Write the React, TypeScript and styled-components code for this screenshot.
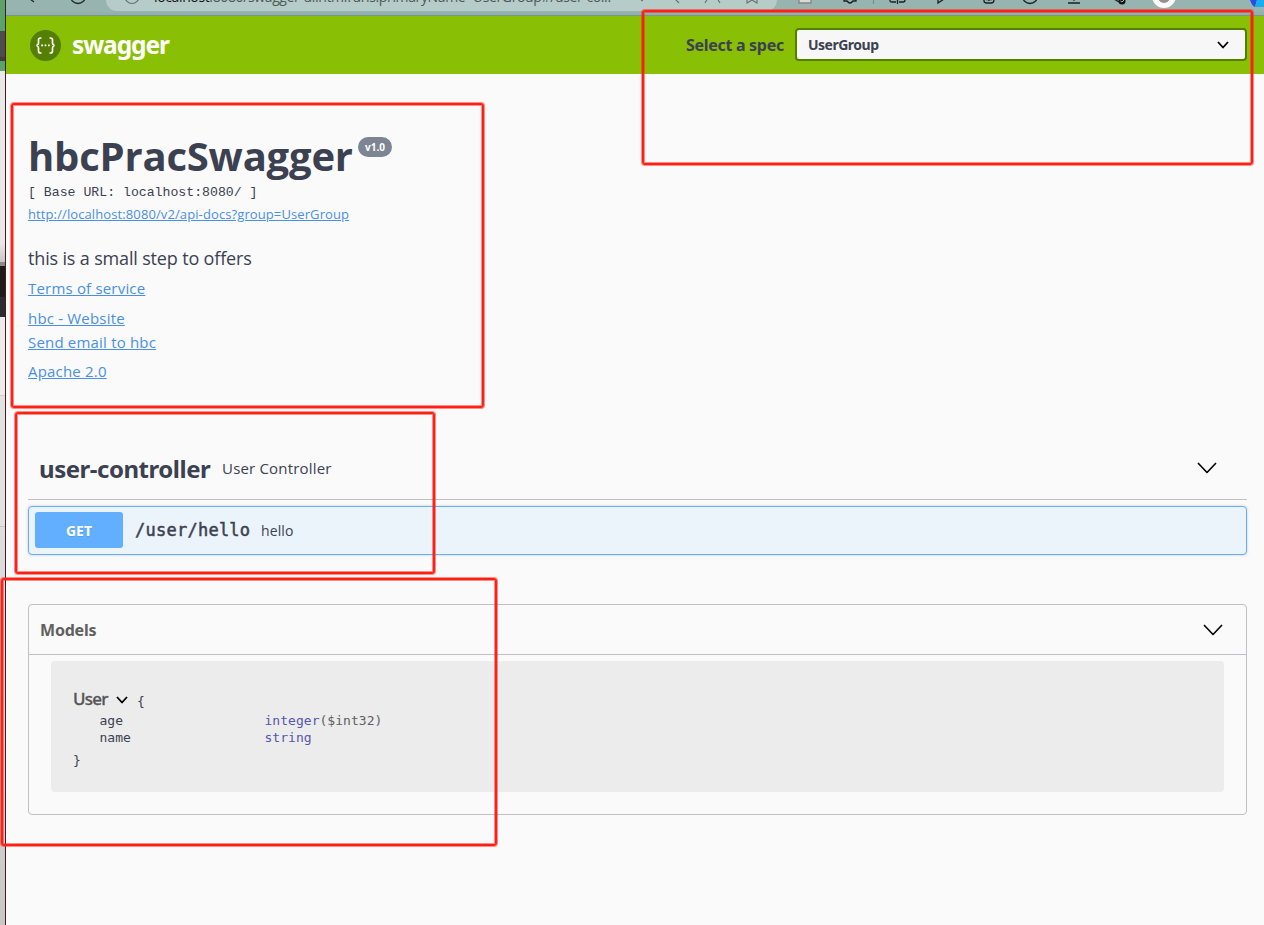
import React from "react";
import styled, { createGlobalStyle } from "styled-components";

const GlobalStyle = createGlobalStyle`
  * { box-sizing: border-box; }
  body { margin: 0; background: #fafafa; color: #3b4151; overflow: hidden; }
`;

const display = `"Noto Sans", "Open Sans", sans-serif`;
const body = `"Open Sans", sans-serif`;
const mono = `"DejaVu Sans Mono", monospace`;

const Screen = styled.div`
  position: relative;
  display: flex;
  width: 1264px;
  height: 925px;
  overflow: hidden;
  font-family: ${body};
`;

const Backdrop = styled.aside`
  width: 6px;
  flex: none;
  display: flex;
  flex-direction: column;
  border-right: 1px solid #451c1a;
`;

const Slab = styled.div<{ $h: number; $bg: string }>`
  height: ${(p) => p.$h}px;
  flex: none;
  background: ${(p) => p.$bg};
`;

const Browser = styled.main`
  flex: 1;
  min-width: 0;
  display: flex;
  flex-direction: column;
`;

const AddressStrip = styled.div`
  height: 16px;
  flex: none;
  display: flex;
  align-items: flex-start;
  background: linear-gradient(#98b4b0 70%, #8fafab);
  border-bottom: 1px solid #7d948c;
  overflow: hidden;
`;

const NavIcons = styled.svg`
  width: 100px;
  height: 15px;
  flex: none;
`;

const AddressField = styled.div`
  width: 671px;
  height: 11px;
  flex: none;
  display: flex;
  background: #b6ccc8;
  border-radius: 0 0 16px 16px;
  overflow: hidden;
`;

const Url = styled.div`
  width: 458px;
  height: 11px;
  flex: none;
  margin-left: 14px;
  font: 14px/18px ${body};
  color: #4d5957;
  white-space: nowrap;
  b { font-weight: 400; color: #101414; }
  span { display: block; margin-top: -12px; letter-spacing: -0.37px; }
`;

const Topbar = styled.header`
  height: 58px;
  flex: none;
  display: flex;
  align-items: center;
  padding: 0 17px 0 24px;
  background: #89bf04;
`;

const Brand = styled.span`
  margin: 0 0 0 11px;
  flex: 1;
  font: 700 24.5px/34px ${display};
  letter-spacing: -1.1px;
  color: #fff;
`;

const SpecLabel = styled.label`
  width: 98px;
  margin-right: 12px;
  font: 700 16px/24px ${display};
  letter-spacing: -0.3px;
  white-space: nowrap;
`;

const SpecSelect = styled.div`
  width: 452px;
  height: 33px;
  margin: -1px 0 0 -1px;
  display: flex;
  align-items: center;
  justify-content: space-between;
  padding: 0 16px 0 11px;
  border: 2px solid #547f00;
  border-radius: 4px;
  background: #f7f7f7;
  font: 700 14px/20px ${display};
  letter-spacing: -0.5px;
`;

const Content = styled.div`
  padding: 56px 17px 0 22px;
`;

const TitleRow = styled.div`
  height: 53px;
  display: flex;
  align-items: flex-start;
`;

const Title = styled.h1`
  margin: 0;
  width: 324px;
  font: 700 40px/52px ${body};
  letter-spacing: -0.2px;
  white-space: nowrap;
`;

const Version = styled.span`
  width: 34px;
  height: 20px;
  margin: 7px 0 0 6px;
  border-radius: 10px;
  background: #7d8492;
  color: #fff;
  font: 700 10px/20px ${body};
  text-align: center;
`;

const BaseUrl = styled.pre`
  margin: 0;
  height: 18px;
  font: 13.2px/20px "Liberation Mono", monospace;
`;

const Link = styled.a<{ $size?: number; $gap: number; $track?: number }>`
  display: block;
  width: fit-content;
  height: 20px;
  margin-top: ${(p) => p.$gap}px;
  font: ${(p) => p.$size ?? 15}px/20px ${body};
  letter-spacing: ${(p) => p.$track ?? 0.19}px;
  color: #4990e2;
  text-decoration: underline;
`;

const Description = styled.p`
  margin: 22px 0 0;
  font: 18px/24px ${body};
  letter-spacing: -0.16px;
`;

const TagHeader = styled.section`
  height: 64px;
  margin-top: 55px;
  display: flex;
  align-items: center;
  padding: 0 30px 0 11px;
  border-bottom: 1px solid #c0c0c4;
`;

const TagName = styled.h2`
  margin: 3px 0 0;
  width: 171px;
  font: 700 24px/32px ${display};
  letter-spacing: -0.47px;
  white-space: nowrap;
`;

const TagDescription = styled.span`
  flex: 1;
  margin-left: 12px;
  font: 15px/20px ${body};
  letter-spacing: 0.19px;
`;

const Operation = styled.section`
  height: 49px;
  margin-top: 6px;
  display: flex;
  align-items: center;
  padding: 0 6px 1px;
  border: 1px solid #61affe;
  border-radius: 4px;
  background: #ebf3fb;
  box-shadow: 0 0 3px rgba(0, 0, 0, 0.19);
`;

const Method = styled.span`
  width: 88px;
  height: 36px;
  border-radius: 3px;
  background: #61affe;
  color: #fff;
  font: 700 14px/37px ${display};
  text-align: center;
  text-shadow: 0 1px 0 rgba(0, 0, 0, 0.1);
`;

const Path = styled.span`
  width: 115px;
  margin-left: 12px;
  font: 400 17px/20px ${mono};
  letter-spacing: 0.25px;
  -webkit-text-stroke: 0.5px #3b4151;
  white-space: nowrap;
`;

const Summary = styled.span`
  margin: 1px 0 0 11px;
  font: 14px/20px ${body};
  letter-spacing: 0.1px;
`;

const Models = styled.section`
  height: 211px;
  margin-top: 49px;
  border: 1px solid #c0c0c4;
  border-radius: 4px;
`;

const ModelsHeader = styled.div`
  height: 50px;
  display: flex;
  align-items: center;
  justify-content: space-between;
  padding: 1px 23px 0 11px;
  border-bottom: 1px solid #c0c0c4;
  color: #606060;
  font: 700 16px/24px ${display};
  letter-spacing: -0.2px;
`;

const ModelBox = styled.div`
  height: 131px;
  margin: 6px 22px 0;
  padding: 27px 22px 0;
  border-radius: 4px;
  background: #ececec;
  font: 13px/17px ${mono};
`;

const ModelHead = styled.div`
  height: 24px;
  display: flex;
  align-items: center;
`;

const ModelName = styled.span`
  width: 35px;
  margin: -2px 8px 0 0;
  font: 500 17px/22px ${display};
  letter-spacing: -0.8px;
  -webkit-text-stroke: 0.3px #555;
  color: #555;
`;

const Brace = styled.span<{ $left?: number; $top?: number }>`
  display: block;
  margin: ${(p) => p.$top ?? 0}px 0 0 ${(p) => p.$left ?? 0}px;
`;

const Property = styled.div`
  height: 17px;
  display: grid;
  grid-template-columns: 165px auto;
  padding-left: 26.5px;
  letter-spacing: 0.03px;
`;

const Type = styled.span`
  color: #55a;
  i { font-style: normal; color: #606060; }
`;

const Highlight = styled.div<{ $x: number; $y: number; $w: number; $h: number }>`
  position: absolute;
  left: ${(p) => p.$x}px;
  top: ${(p) => p.$y}px;
  width: ${(p) => p.$w}px;
  height: ${(p) => p.$h}px;
  border: 2px solid #ff2015;
  border-radius: 3px;
  box-shadow: 0 0 0 1px rgba(255, 32, 21, 0.5), inset 0 0 0 1px rgba(255, 32, 21, 0.5);
`;

const Chevron = ({ w, h, sw }: { w: number; h: number; sw: number }) => (
  <svg width={w} height={h} viewBox={`0 0 ${w} ${h}`} fill="none" stroke="#000" strokeWidth={sw}>
    <path d={`M1 1 L${w / 2} ${h - 1.5} L${w - 1} 1`} strokeLinejoin="round" />
  </svg>
);

const ToolIcons = styled.svg`
  width: 487px;
  height: 15px;
  flex: none;
`;

export default function App() {
  return (
    <Screen>
      <GlobalStyle />
      <Backdrop>
        <Slab $h={31} $bg="#5aa46b" />
        <Slab $h={26} $bg="#4c4c4c" />
        <Slab $h={4} $bg="#3d3d3d" />
        <Slab $h={10} $bg="#5aa46b" />
        <Slab $h={191} $bg="linear-gradient(#e8e8e8 90%, #c6c6c6)" />
        <Slab $h={4} $bg="#8a8a8a" />
        <Slab $h={31} $bg="#1c1c1c" />
        <Slab $h={20} $bg="#2c2d30" />
        <Slab $h={78} $bg="#ececec" />
        <Slab $h={1} $bg="#cfcfcf" />
        <Slab $h={130} $bg="#e2e2e2" />
        <Slab $h={1} $bg="#c4c4c4" />
        <Slab $h={398} $bg="linear-gradient(#dedede, #c8c8c8)" />
      </Backdrop>
      <Browser>
        <AddressStrip>
          <NavIcons viewBox="0 0 100 15" fill="none" stroke="#202828" strokeWidth="1.3">
            <path d="M24 -1 L28 2" />
            <circle cx="72" cy="-4" r="7.5" />
          </NavIcons>
          <AddressField>
            <svg width="34" height="11" fill="none" stroke="#64716f" strokeWidth="1.2">
              <circle cx="26" cy="-3.5" r="7" />
            </svg>
            <Url>
              <span><b>localhost</b>:8080/swagger-ui.html?urls.primaryName=UserGroup#/user-co...</span>
            </Url>
            <svg width="165" height="11" fill="none" stroke="#64716f" strokeWidth="1.1">
              <path d="M29 0 l2 1 M63 -1 l4 4 M93 3 l3 -5 M105 -2 l3 5 M135 -2 v5 l5 -3 l5 3 v-5" />
            </svg>
          </AddressField>
          <ToolIcons viewBox="777 0 487 15" fill="none" stroke="#182020" strokeWidth="1.3">
            <path d="M799 -3 v6 h12 v-6" stroke="#858585" fill="#d5d9d8" />
            <path d="M844 -1 v2 h3 q3 4 6 0 h3 v-2" />
            <path d="M873.5 0 v4" stroke="#7b918e" />
            <path d="M890 -1 v2 q0 1 2 1 h4 M899 2 h4 q2 0 2 -2 M897.5 -1 v5" />
            <path d="M938 -2 v5 l6 -4" />
            <path d="M984 -2 v3 q0 2 3 2 h4 q3 0 3 -3 v-2 M989 -2 v3 M986 -0.5 h6" />
            <circle cx="1030" cy="-4" r="7.5" />
            <path d="M1068 3 h12 M1070 -2 l4 2 l4 -2" />
            <path d="M1114 -1 l5 3" />
            <circle cx="1122" cy="1" r="3.5" fill="#101616" stroke="none" />
            <path d="M1120.5 1 l1.5 1 l2 -2" stroke="#fff" strokeWidth=".7" />
            <circle cx="1164" cy="-4" r="12" fill="#fafafa" stroke="none" />
            <circle cx="1164" cy="-3" r="6" fill="#929292" stroke="none" />
            <path d="M1250 0 h7 l-2 7 q-3 -1 -5 -7" fill="#2450df" stroke="none" />
            <path d="M1257 0 h7 v7 h-9z" fill="#16aef0" stroke="none" />
          </ToolIcons>
        </AddressStrip>
        <Topbar>
          <svg width="31" height="32" viewBox="0 0 31 32" fill="none" stroke="#fff" strokeWidth="1.7">
            <circle cx="15.5" cy="16.5" r="15.5" fill="#547f00" stroke="none" />
            <path d="M11.5 9 h-1 q-2 0 -2 2 v3 q0 2 -2 2.5 q2 .5 2 2.5 v3 q0 2 2 2 h1 M19.5 9 h1 q2 0 2 2 v3 q0 2 2 2.5 q-2 .5 -2 2.5 v3 q0 2 -2 2 h-1" />
            <path d="M11.2 16.3 h1.8 M14.6 16.3 h1.8 M18 16.3 h1.8" />
          </svg>
          <Brand>swagger</Brand>
          <SpecLabel>Select a spec</SpecLabel>
          <SpecSelect>
            UserGroup
            <Chevron w={12} h={8} sw={1.8} />
          </SpecSelect>
        </Topbar>
        <Content>
          <TitleRow>
            <Title>hbcPracSwagger</Title>
            <Version>v1.0</Version>
          </TitleRow>
          <BaseUrl>[ Base URL: localhost:8080/ ]</BaseUrl>
          <Link $size={13} $gap={3} $track={0.105}>http://localhost:8080/v2/api-docs?group=UserGroup</Link>
          <Description>this is a small step to offers</Description>
          <Link $gap={8}>Terms of service</Link>
          <Link $gap={10}>hbc - Website</Link>
          <Link $gap={4}>Send email to hbc</Link>
          <Link $gap={9}>Apache 2.0</Link>
          <TagHeader>
            <TagName>user-controller</TagName>
            <TagDescription>User Controller</TagDescription>
            <Chevron w={20} h={12} sw={1.6} />
          </TagHeader>
          <Operation>
            <Method>GET</Method>
            <Path>/user/hello</Path>
            <Summary>hello</Summary>
          </Operation>
          <Models>
            <ModelsHeader>
              Models
              <Chevron w={20} h={12} sw={1.6} />
            </ModelsHeader>
            <ModelBox>
              <ModelHead>
                <ModelName>User</ModelName>
                <Chevron w={12} h={8} sw={1.8} />
                <Brace $left={9} $top={2}>{"{"}</Brace>
              </ModelHead>
              <Property><span>age</span><Type>integer<i>($int32)</i></Type></Property>
              <Property><span>name</span><Type>string</Type></Property>
              <Brace $top={6}>{"}"}</Brace>
            </ModelBox>
          </Models>
        </Content>
      </Browser>
      <Highlight $x={642} $y={10} $w={611} $h={155} />
      <Highlight $x={11} $y={103} $w={473} $h={305} />
      <Highlight $x={15} $y={412} $w={420} $h={162} />
      <Highlight $x={1} $y={578} $w={496} $h={268} />
    </Screen>
  );
}
